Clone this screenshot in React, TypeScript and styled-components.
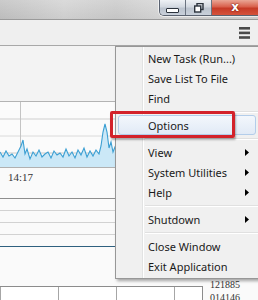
import styled, {createGlobalStyle} from "styled-components";

const GlobalStyle = createGlobalStyle`
  html, body {
    margin: 0;
    padding: 0;
    overflow: hidden;
    background: #f0f0f0;
  }
`

const points: [number, number][] = [
  [0, 50], [3, 55], [6, 49], [9, 54], [12, 52], [15, 56], [18, 50], [21, 44], [23, 38], [25, 52],
  [27, 47], [30, 57], [33, 50], [36, 54], [39, 48], [42, 55], [45, 52], [48, 50], [51, 56], [54, 49],
  [57, 53], [60, 51], [63, 55], [66, 47], [69, 54], [72, 50], [75, 56], [78, 48], [81, 53], [84, 46],
  [87, 55], [90, 49], [93, 54], [96, 48], [99, 52], [101, 44], [103, 30], [105, 22], [107, 30], [109, 46],
  [111, 40], [113, 50], [115, 45], [117, 48], [120, 52], [123, 49]
]

type Entry = { label?: string; sub?: boolean; active?: boolean; sep?: boolean }

const menu: Entry[] = [
  {label: 'New Task  (Run...)'},
  {label: 'Save List To File'},
  {label: 'Find'},
  {sep: true},
  {label: 'Options', active: true},
  {sep: true},
  {label: 'View', sub: true},
  {label: 'System Utilities', sub: true},
  {label: 'Help', sub: true},
  {sep: true},
  {label: 'Shutdown', sub: true},
  {sep: true},
  {label: 'Close Window'},
  {label: 'Exit Application'},
]

const App = () => {
  const line = points.map(([x, y]) => `${x},${y}`).join(' ')
  const area = `0,65 ${line} 123,65`

  return (
    <>
      <GlobalStyle/>
      <Page>
        <TitleBar>
          <Caption>
            <CapButton $w={25}>
              <MinGlyph/>
            </CapButton>
            <CapButton $w={25}>
              <svg width="10" height="10" viewBox="0 0 10 10">
                <rect x="3" y="0.5" width="6" height="6" fill="none" stroke="#2c333d" strokeWidth="1.4"/>
                <rect x="0.7" y="3" width="6" height="6" fill="#fff" stroke="#2c333d" strokeWidth="1.4"/>
              </svg>
            </CapButton>
            <CloseButton>x</CloseButton>
          </Caption>
        </TitleBar>

        <Toolbar>
          <svg width="11" height="12" viewBox="0 0 11 12">
            <rect x="0" y="0" width="11" height="2.6" fill="#4a4a4a"/>
            <rect x="0" y="4.6" width="11" height="2.6" fill="#4a4a4a"/>
            <rect x="0" y="9.2" width="11" height="2.6" fill="#4a4a4a"/>
          </svg>
        </Toolbar>

        <Summary/>

        <Chart width="258" height="65" viewBox="0 0 258 65" preserveAspectRatio="none">
          <rect x="0" y="0" width="258" height="65" fill="#fbfbfb"/>
          <line x1="0" y1="17" x2="258" y2="17" stroke="#cfcfcf"/>
          <line x1="0" y1="34" x2="258" y2="34" stroke="#dadada"/>
          <line x1="0" y1="51" x2="258" y2="51" stroke="#c8c8c8"/>
          <line x1="20.5" y1="0" x2="20.5" y2="65" stroke="#c4c4c4"/>
          <polygon points={area} fill="#cbe8f7"/>
          <polyline points={line} fill="none" stroke="#3b9fd3" strokeWidth="1.1"/>
        </Chart>

        <TimeLabel>14:17</TimeLabel>

        <Rule $c="#8e8e8e"/>
        <Rule $c="#d2d2d2"/>
        <Rule $c="#d2d2d2"/>
        <Rule $c="#d2d2d2"/>
        <Rule $c="#2f607f" $h={31}/>

        <Bottom>
          <Table>
            <Cell/>
            <Cell/>
            <Cell/>
            <Cell $w={30}/>
          </Table>
          <Numbers>
            <span>121885</span>
            <span>014146</span>
          </Numbers>
        </Bottom>

        <Menu>
          {menu.map((m, i) => m.sep ?
            <Separator key={i}/> :
            <Item key={i} $active={m.active}>
              <span>{m.label}</span>
              {m.sub && (
                <svg width="4" height="7" viewBox="0 0 4 7">
                  <polygon points="0,0 4,3.5 0,7" fill="#000"/>
                </svg>
              )}
            </Item>
          )}
        </Menu>

        <Callout/>
      </Page>
    </>
  )
}

export default App

const Page = styled.div`
  position: relative;
  width: 258px;
  height: 300px;
  overflow: hidden;
  display: flex;
  flex-direction: column;
  background: #fafafa;
  font-family: "Noto Sans", "Open Sans", sans-serif;
`

const TitleBar = styled.div`
  height: 19px;
  flex-shrink: 0;
  display: flex;
  justify-content: flex-end;
  align-items: flex-start;
  border-bottom: 1px solid #9a9a9a;
  background: linear-gradient(to bottom, rgba(255, 255, 255, .15), rgba(0, 0, 0, .03)),
  linear-gradient(to right, #c2c2c2, #d4d4d4 25%, #cbcbcb 45%, #d9d9d9 65%, #cfcfcf 85%, #d2d2d2);
`

const Caption = styled.div`
  display: flex;
  height: 15px;
  border: 1px solid #5a6270;
  border-top: none;
  border-right: none;
  border-radius: 0 0 0 5px;
  overflow: hidden;
  box-shadow: 0 0 0 1px rgba(255, 255, 255, .6);
`

const CapButton = styled.div<{ $w: number }>`
  width: ${({$w}) => $w}px;
  display: flex;
  align-items: center;
  justify-content: center;
  border-right: 1px solid #6b7380;
  background: linear-gradient(to bottom, #eef1f5, #d3d9e1 45%, #bcc4cf 55%, #c9d0da);
`

const MinGlyph = styled.div`
  width: 11px;
  height: 3px;
  margin-top: 5px;
  background: #fff;
  border: 1px solid #2c333d;
  border-radius: 1px;
`

const CloseButton = styled.div`
  width: 46px;
  display: flex;
  align-items: center;
  justify-content: center;
  color: #fff;
  font: bold 12px "DejaVu Sans", sans-serif;
  line-height: 1;
  padding-bottom: 2px;
  text-shadow: 0 0 2px #7a1a10, 0 0 1px #7a1a10;
  background: linear-gradient(to bottom, #eaa695, #d9604c 45%, #c63a26 55%, #d5533c);
`

const Toolbar = styled.div`
  height: 25px;
  flex-shrink: 0;
  display: flex;
  align-items: center;
  justify-content: flex-end;
  padding-right: 8px;
  background: #efefef;
  border-bottom: 1px solid #a8a8a8;
`

const Summary = styled.div`
  height: 55px;
  flex-shrink: 0;
  background: #f3f3f3;
  border-bottom: 1px solid #b3b3b3;
`

const Chart = styled.svg`
  display: block;
  flex-shrink: 0;
  border-bottom: 1px solid #b0b0b0;
`

const TimeLabel = styled.div`
  height: 30px;
  flex-shrink: 0;
  padding: 3px 0 0 8px;
  box-sizing: border-box;
  font: 11px "Liberation Serif", serif;
  color: #333;
`

const Rule = styled.div<{ $c: string; $h?: number }>`
  height: ${({$h}) => $h ?? 11}px;
  flex-shrink: 0;
  border-top: 1px solid ${({$c}) => $c};
`

const Bottom = styled.div`
  display: flex;
  align-items: flex-start;
  flex: 1;
`

const Table = styled.div`
  display: flex;
  width: 202px;
  height: 40px;
  margin-top: 8px;
  border-top: 1px solid #8c8c8c;
  border-right: 1px solid #8c8c8c;
  background: #fff;
`

const Cell = styled.div<{ $w?: number }>`
  width: ${({$w}) => $w ?? 57}px;
  flex-shrink: 0;
  border-left: 1px solid #a6a6a6;
`

const Numbers = styled.div`
  display: flex;
  flex-direction: column;
  padding: 0 0 0 7px;
  font: 10px "Liberation Serif", serif;
  line-height: 13px;
  color: #333;
`

const Menu = styled.div`
  position: absolute;
  left: 115px;
  top: 46px;
  width: 145px;
  padding: 1px 0 2px;
  border: 1px solid #979797;
  box-shadow: 2px 2px 3px rgba(0, 0, 0, .35);
  background: linear-gradient(to right, #f0f0f0 26px, #e2e3e3 26px, #e2e3e3 27px, #fff 27px, #fff 28px, #f0f0f0 28px);
`

const Item = styled.div<{ $active?: boolean }>`
  height: 20px;
  box-sizing: border-box;
  margin: 0 5px 0 2px;
  display: flex;
  align-items: center;
  justify-content: space-between;
  padding: 0 6px 0 29px;
  font-size: 11px;
  color: #1a1a1a;
  border: 1px solid ${({$active}) => $active ? '#b3cdea' : 'transparent'};
  border-radius: 3px;
  background: ${({$active}) => $active ? 'linear-gradient(to bottom, #f3f7fc, #e1eaf6)' : 'transparent'};
`

const Separator = styled.div`
  height: 7px;
  margin-left: 29px;
  display: flex;
  align-items: center;

  &::after {
    content: '';
    flex: 1;
    height: 0;
    border-top: 1px solid #e0e0e0;
    border-bottom: 1px solid #fff;
  }
`

const Callout = styled.div`
  position: absolute;
  left: 110px;
  top: 111px;
  width: 125px;
  height: 27px;
  box-sizing: border-box;
  border: 3px solid #d3222a;
  border-radius: 2px;
  box-shadow: 1px 2px 2px rgba(0, 0, 0, .3);
`
